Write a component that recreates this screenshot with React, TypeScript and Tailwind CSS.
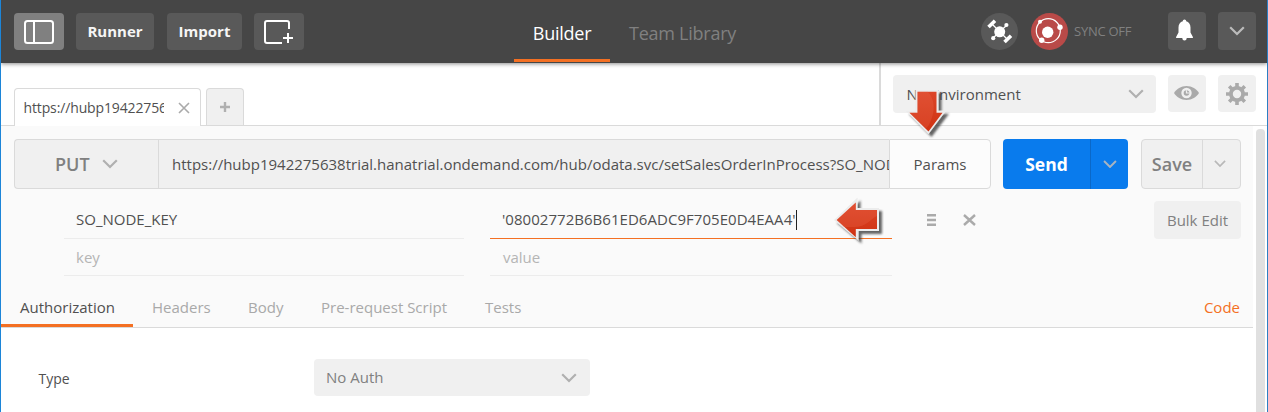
import React from 'react';

function Chevron({ className = '', width = 16, stroke = 2.2 }: { className?: string; width?: number; stroke?: number }) {
  return (
    <svg className={className} width={width} height={(width * 10) / 16} viewBox="0 0 16 10" fill="none" stroke="currentColor" strokeWidth={stroke}>
      <path d="M1.2 1.2 8 8l6.8-6.8" />
    </svg>
  );
}

function RedArrow({ className, id, outline, body, shine }: { className: string; id: string; outline: string; body: string; shine: string }) {
  return (
    <svg className={className} width="52" height="54" viewBox="0 0 52 54">
      <defs>
        <linearGradient id={id} x1="0" y1="0" x2="0" y2="1">
          <stop offset="0" stopColor="#dc4528" />
          <stop offset="1" stopColor="#cf3212" />
        </linearGradient>
        <filter id={id + '-shadow'} x="-20%" y="-20%" width="150%" height="150%">
          <feDropShadow dx="3" dy="3" stdDeviation="1" floodColor="#333" floodOpacity="0.75" />
        </filter>
      </defs>
      <path filter={'url(#' + id + '-shadow)'} fill="#ececec" d={outline} />
      <path fill={'url(#' + id + ')'} d={body} />
      <path fill="#ee6f55" opacity=".25" d={shine} />
    </svg>
  );
}

function Header() {
  return (
    <header className="relative z-10 flex h-[63px] shrink-0 bg-[#464646] text-white shadow-[0_1px_4px_rgba(0,0,0,0.45)]">
      <div className="flex w-[513px] items-start pt-[13px] pl-[13px] text-[15px] font-bold">
        <button className="flex h-[37px] w-[50px] items-center justify-center rounded bg-[#808080]">
          <svg width="30" height="24" viewBox="0 0 30 24" fill="none" stroke="#fff" strokeWidth="2">
            <rect x="1" y="1" width="28" height="22" rx="2.5" />
            <path d="M10 1v22" />
          </svg>
        </button>
        <button className="ml-3 h-[37px] w-[78px] rounded bg-[#595959] text-[#f5f5f5]">Runner</button>
        <button className="ml-[13px] h-[37px] w-[75px] rounded bg-[#595959] text-[#f5f5f5]">Import</button>
        <button className="ml-3 flex h-[37px] w-[50px] items-center justify-center rounded bg-[#595959]">
          <svg width="30" height="24" viewBox="0 0 30 24" fill="none" stroke="#fff" strokeWidth="2">
            <path d="M25 9V3a2 2 0 0 0-2-2H3a2 2 0 0 0-2 2v18a2 2 0 0 0 2 2h15M24 13v10M19 18h10" />
          </svg>
        </button>
      </div>
      <nav className="flex text-[18px] tracking-[-0.25px]">
        <div className="flex h-[62px] w-24 justify-center border-b-[3px] border-[#f47023] pt-5 leading-[26px]">Builder</div>
        <div className="ml-[19px] pt-5 leading-[26px] text-[#808080]">Team Library</div>
      </nav>
      <div className="ml-auto flex items-start pr-[11px]">
        <svg className="mt-[13px]" width="37" height="37" viewBox="0 0 37 37">
          <circle cx="18.5" cy="18.5" r="18.5" fill="#595959" />
          <circle cx="18.7" cy="18.8" r="5.5" fill="#fff" />
          <g stroke="#fff" strokeWidth="1.3">
            <path d="m11 11 15 15M26 12 12 25" />
            <path d="m7.500 14 6.500-6.200M23.500 29l6.500-6.200" strokeWidth="3.6" />
          </g>
          <circle cx="25.4" cy="12" r="2.1" fill="#fff" />
          <circle cx="12.2" cy="25.2" r="2.1" fill="#fff" />
        </svg>
        <svg className="mt-[13px] ml-[13px]" width="37" height="37" viewBox="0 0 37 37">
          <circle cx="18.5" cy="18.5" r="18.5" fill="#b94a48" />
          <circle cx="17.3" cy="17.7" r="12" fill="none" stroke="#fff" strokeWidth="1.2" />
          <circle cx="16.7" cy="19.2" r="5.7" fill="#fff" />
          <circle cx="29" cy="14.2" r="2.7" fill="#fff" />
          <circle cx="9" cy="8.8" r="2" fill="#fff" />
          <circle cx="10.7" cy="27.3" r="2.7" fill="#fff" />
        </svg>
        <span className="mt-[21px] ml-[6px] w-[94px] text-[13px] leading-5 tracking-[-0.25px] text-[#808080]">SYNC OFF</span>
        <button className="mt-3 flex h-[38px] w-[38px] items-center justify-center rounded bg-[#595959]">
          <svg className="-translate-x-[2.5px] -translate-y-px" width="18" height="22" viewBox="0 0 18 22" fill="#fff">
            <path d="M9 .5c1 0 1.7.8 1.7 1.8C13.4 3 15 5.4 15 8.5v5l2.4 4.6v1H.6v-1L3 13.500v-5C3 5.400 4.600 3 7.300 2.300 7.300 1.300 8 .5 9 .5ZM6.800 19h4.400c0 1.700-1 2.500-2.200 2.500S6.800 20.700 6.800 19Z" />
          </svg>
        </button>
        <button className="mt-3 ml-3 flex h-[38px] w-[38px] items-center justify-center rounded bg-[#595959] text-[#bbb]">
          <Chevron />
        </button>
      </div>
    </header>
  );
}

function TabRow() {
  return (
    <div className="flex h-[63px] shrink-0 border-b border-[#dadada]">
      <div className="flex w-[878px] items-end pl-[13px]">
        <div className="-mb-px flex h-[38px] w-[187px] items-center rounded-t border border-b-0 border-[#dadada] bg-white pl-[8.5px] text-[14px] text-[#505050]">
          <span className="w-[140px] overflow-hidden tracking-[-0.13px] whitespace-nowrap">https://hubp19422756</span>
          <svg className="ml-[14px]" width="12" height="12" viewBox="0 0 12 12" stroke="#aaa" strokeWidth="1.6">
            <path d="m1 1 10 10M11 1 1 11" />
          </svg>
        </div>
        <div className="ml-[5px] flex h-[37px] w-[38px] items-center justify-center rounded-t border border-b-0 border-[#dadada] bg-[#f0f0f0]">
          <svg width="10" height="10" viewBox="0 0 10 10" stroke="#b0b0b0" strokeWidth="2.4">
            <path d="M5 0v10M0 5h10" />
          </svg>
        </div>
      </div>
      <div className="flex flex-1 items-start border-l-2 border-[#dadada] pt-3 pl-3">
        <div className="flex h-[38px] w-[263px] items-center justify-between rounded bg-[#f0f0f0] pr-3 pl-[13.5px] text-[15px] text-[#505050]">
          No Environment
          <Chevron className="text-[#b0b0b0]" />
        </div>
        <button className="ml-3 flex h-[37px] w-[38px] items-center justify-center rounded bg-[#f0f0f0]">
          <svg className="-translate-x-[0.5px] -translate-y-px" width="26" height="16" viewBox="0 0 26 16">
            <path d="M.5 8C3 4 7.500 1 13 1s10 3 12.500 7C23 12 18.500 15 13 15S3 12 .5 8Z" fill="#aaa" />
            <circle cx="13" cy="8" r="5.200" fill="#f0f0f0" />
            <circle cx="13" cy="8" r="2.800" fill="#aaa" />
            <path d="M13 5.200v2.800h2.800" stroke="#f0f0f0" strokeWidth="1.200" fill="none" />
          </svg>
        </button>
        <button className="ml-3 flex h-[37px] w-[38px] items-center justify-center rounded bg-[#f0f0f0]">
          <svg width="22" height="22" viewBox="0 0 22 22" fill="none" stroke="#aaa">
            <circle cx="11" cy="11" r="6.100" strokeWidth="3.800" />
            <path d="M11 0v4M11 18v4M0 11h4M18 11h4M3.200 3.200l3 3M15.800 15.800l3 3M3.200 18.800l3-3M15.800 6.200l3-3" strokeWidth="3.600" />
          </svg>
        </button>
      </div>
    </div>
  );
}

function UrlBar() {
  return (
    <div className="flex h-[50px] pl-[13px]">
      <div className="flex w-[144px] items-center rounded-l border border-r-0 border-[#dadada] bg-[#f0f0f0] pl-[40px] text-[18px] font-semibold text-[#808080]">
        <span className="w-[47px]">PUT</span>
        <Chevron className="text-[#b0b0b0]" />
      </div>
      <div className="flex w-[731px] items-center overflow-hidden border border-r-0 border-[#dadada] bg-[#f0f0f0] pl-[13px] text-[15px] whitespace-nowrap text-[#505050]">
        https://hubp1942275638trial.hanatrial.ondemand.com/hub/odata.svc/setSalesOrderInProcess?SO_NOD
      </div>
      <div className="flex w-[102px] items-center justify-center rounded-r border border-[#dadada] bg-[#fcfcfc] text-[15px] text-[#505050]">Params</div>
      <div className="ml-3 flex w-[125px] rounded bg-[#097bed] text-white">
        <div className="flex w-[88px] items-center justify-center border-r border-[#0a68c8] text-[17.5px] font-bold">Send</div>
        <div className="flex flex-1 items-center justify-center text-[#a8b4c0]">
          <Chevron width={14} />
        </div>
      </div>
      <div className="ml-[13px] flex w-[100px] rounded border border-[#dadada] bg-[#f0f0f0] text-[#808080]">
        <div className="flex w-[61px] items-center justify-center border-r border-[#dadada] text-[18px] font-semibold">Save</div>
        <div className="flex flex-1 items-center justify-center pr-1 text-[#b8b8b8]">
          <Chevron width={12} />
        </div>
      </div>
    </div>
  );
}

function ParamsEditor() {
  return (
    <div className="flex h-[87px] pl-[63px] text-[15px] text-[#505050]">
      <div className="w-[400px]">
        <div className="flex h-[50px] items-center border-b border-[#ececec] pt-3 pl-3">SO_NODE_KEY</div>
        <div className="flex h-[37px] items-center border-b border-[#ececec] pl-3 text-[#b5b5b5]">key</div>
      </div>
      <div className="ml-[26px] w-[402px]">
        <div className="flex h-[50px] items-center border-b border-[#f47023] pt-3 pl-3">
          <span className="tracking-[0.04px]">'08002772B6B61ED6ADC9F705E0D4EAA4'</span>
          <span className="h-5 w-px bg-[#222]" />
        </div>
        <div className="flex h-[37px] items-center border-b border-[#ececec] pl-[13px] text-[#b5b5b5]">value</div>
      </div>
      <div className="flex flex-1 items-start pr-3">
        <svg className="mt-[25px] ml-[35px]" width="9" height="12" viewBox="0 0 9 12" fill="#aaa">
          <path d="M0 0h9v2.400H0zM0 4.800h9v2.400H0zM0 9.600h9v2.400H0z" />
        </svg>
        <svg className="mt-[25px] ml-[27px]" width="13" height="12" viewBox="0 0 13 12" stroke="#aaa" strokeWidth="2.400">
          <path d="m1 1 11 10M12 1 1 11" />
        </svg>
        <button className="mt-3 ml-auto h-[38px] w-[87px] rounded bg-[#f0f0f0] text-[#808080]">Bulk Edit</button>
      </div>
    </div>
  );
}

function SectionTabs() {
  return (
    <div className="flex h-[52px] items-end border-b border-[#dadada] text-[15px] leading-[22px] text-[#a9a9a9]">
      <div className="flex h-[31px] w-[132px] justify-center border-b-[3px] border-[#f47023] pl-px text-[#505050]">Authorization</div>
      <div className="ml-[19px] h-[31px] w-24">Headers</div>
      <div className="h-[31px] w-[73px]">Body</div>
      <div className="h-[31px] w-[164px]">Pre-request Script</div>
      <div className="h-[31px]">Tests</div>
      <div className="mr-[13px] ml-auto h-[31px] text-[#f47023]">Code</div>
    </div>
  );
}

export default function App() {
  return (
    <div className="relative flex h-[412px] w-[1268px] flex-col overflow-hidden border-r border-l border-r-[#2b7fc4] border-l-[#1c85d8] bg-white font-['Open_Sans',sans-serif]">
      <Header />
      <TabRow />
      <div className="flex flex-1">
        <main className="flex w-[1252px] flex-col">
          <section className="h-[202px] bg-[#fafafa] pt-[13px]">
            <UrlBar />
            <ParamsEditor />
            <SectionTabs />
          </section>
          <div className="flex pt-[31px] pl-[37px] text-[15px]">
            <div className="flex h-[37px] w-[276px] items-center pt-px pl-[0.5px] text-[14px] text-[#505050]">Type</div>
            <div className="flex h-[37px] w-[276px] items-center justify-between rounded bg-[#f0f0f0] pr-[13px] pl-3 text-[#808080]">
              No Auth
              <Chevron className="text-[#b0b0b0]" />
            </div>
          </div>
        </main>
        <div className="mt-[3px] ml-[3px] w-[9px] rounded-t bg-[#e0e0e0]" />
      </div>
      <RedArrow
        id="arrow-down"
        className="absolute top-[87px] left-[901px] z-20"
        outline="M13.500 3H36.500V23.800H44L26.500 47 4 24H13.500Z"
        body="M15.500 4.800H34.500V25.700H40.500L26.500 44.500 7.500 25.700H15.500Z"
        shine="M15.500 4.800H26C33 13 34 24 27 38L24 41.200 7.500 25.700H15.500Z"
      />
      <RedArrow
        id="arrow-left"
        className="absolute top-[196px] left-[831px] z-20"
        outline="M2 24 25.500 1.500V12H47V35H26.500V44.500Z"
        body="M4.700 24 23.800 6.500V14H45V33H23.800V41.300Z"
        shine="M4.700 24 23.800 6.500V14H45V20C38 23 35 31 22 31H11.500Z"
      />
    </div>
  );
}
